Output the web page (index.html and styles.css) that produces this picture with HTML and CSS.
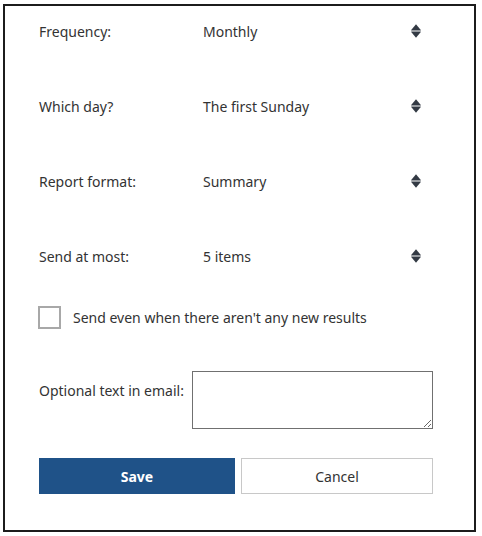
FILE: index.html
```html
<!DOCTYPE html>
<html lang="en">
<head>
<meta charset="utf-8">
<title>Alert settings</title>
<link rel="stylesheet" href="styles.css">
</head>
<body>
<div class="panel">
  <div class="row">
    <span class="label">Frequency:</span>
    <div class="select"><span class="value">Monthly</span><svg class="sort" viewBox="0 0 10 14" width="10" height="14"><path d="M5 0.2 L9.8 5.9 Q10.1 6.4 9.4 6.4 H0.6 Q-0.1 6.4 0.2 5.9 Z"/><path d="M0.6 7.6 H9.4 Q10.1 7.6 9.8 8.1 L5 13.8 L0.2 8.1 Q-0.1 7.6 0.6 7.6 Z"/></svg></div>
  </div>
  <div class="row">
    <span class="label">Which day?</span>
    <div class="select"><span class="value">The first Sunday</span><svg class="sort" viewBox="0 0 10 14" width="10" height="14"><path d="M5 0.2 L9.8 5.9 Q10.1 6.4 9.4 6.4 H0.6 Q-0.1 6.4 0.2 5.9 Z"/><path d="M0.6 7.6 H9.4 Q10.1 7.6 9.8 8.1 L5 13.8 L0.2 8.1 Q-0.1 7.6 0.6 7.6 Z"/></svg></div>
  </div>
  <div class="row">
    <span class="label">Report format:</span>
    <div class="select"><span class="value">Summary</span><svg class="sort" viewBox="0 0 10 14" width="10" height="14"><path d="M5 0.2 L9.8 5.9 Q10.1 6.4 9.4 6.4 H0.6 Q-0.1 6.4 0.2 5.9 Z"/><path d="M0.6 7.6 H9.4 Q10.1 7.6 9.8 8.1 L5 13.8 L0.2 8.1 Q-0.1 7.6 0.6 7.6 Z"/></svg></div>
  </div>
  <div class="row">
    <span class="label">Send at most:</span>
    <div class="select"><span class="value">5 items</span><svg class="sort" viewBox="0 0 10 14" width="10" height="14"><path d="M5 0.2 L9.8 5.9 Q10.1 6.4 9.4 6.4 H0.6 Q-0.1 6.4 0.2 5.9 Z"/><path d="M0.6 7.6 H9.4 Q10.1 7.6 9.8 8.1 L5 13.8 L0.2 8.1 Q-0.1 7.6 0.6 7.6 Z"/></svg></div>
  </div>
  <label class="check-row">
    <span class="checkbox"></span>
    <span class="check-text">Send even when there aren't any new results</span>
  </label>
  <div class="text-row">
    <span class="text-label">Optional text in email:</span>
    <textarea class="email-text"></textarea>
  </div>
  <div class="buttons">
    <button class="btn btn-save">Save</button>
    <button class="btn btn-cancel">Cancel</button>
  </div>
</div>
</body>
</html>
```
FILE: styles.css
```css
html, body {
  margin: 0;
  padding: 0;
  background: #ffffff;
}
body {
  font-family: "Noto Sans", "Open Sans", sans-serif;
  font-size: 14px;
  color: #333333;
}
.panel {
  margin: 4px 0 0 3px;
  border: 2px solid #1c1c1c;
  padding: 10px 41px 0 34px;
  box-sizing: content-box;
  display: flex;
  flex-direction: column;
  width: 394px;
  height: 514px;
}
.row {
  display: flex;
  align-items: center;
  height: 30px;
  margin-bottom: 45px;
}
.row:nth-child(4) {
  margin-bottom: 31px;
}
.label {
  width: 164px;
  flex: none;
}
.select {
  flex: 1;
  display: flex;
  align-items: center;
  justify-content: space-between;
  padding-right: 12px;
}
.sort {
  fill: #333a44;
  display: block;
  margin-bottom: 1px;
}
.check-row {
  display: flex;
  align-items: center;
  height: 30px;
}
.checkbox {
  width: 19px;
  height: 19px;
  border: 2px solid #a8a8a8;
  margin-left: -1px;
  margin-right: 12px;
  flex: none;
}
.text-row {
  display: flex;
  align-items: flex-start;
  margin-top: 39px;
}
.text-label {
  width: 153px;
  flex: none;
  margin-top: 10px;
}
.email-text {
  width: 241px;
  height: 58px;
  box-sizing: border-box;
  border: 1px solid #707070;
  border-radius: 0;
  margin: 0;
  padding: 4px;
  font: inherit;
}
.buttons {
  display: flex;
  gap: 6px;
  margin-top: 29px;
}
.btn {
  height: 36px;
  box-sizing: border-box;
  font-family: inherit;
  font-size: 14px;
  border-radius: 0;
  cursor: pointer;
}
.btn-save {
  width: 196px;
  background: #1f5288;
  border: 1px solid #1f5288;
  color: #ffffff;
  font-weight: 700;
}
.btn-cancel {
  width: 192px;
  background: #ffffff;
  border: 1px solid #c8c8c8;
  color: #333333;
}
```
